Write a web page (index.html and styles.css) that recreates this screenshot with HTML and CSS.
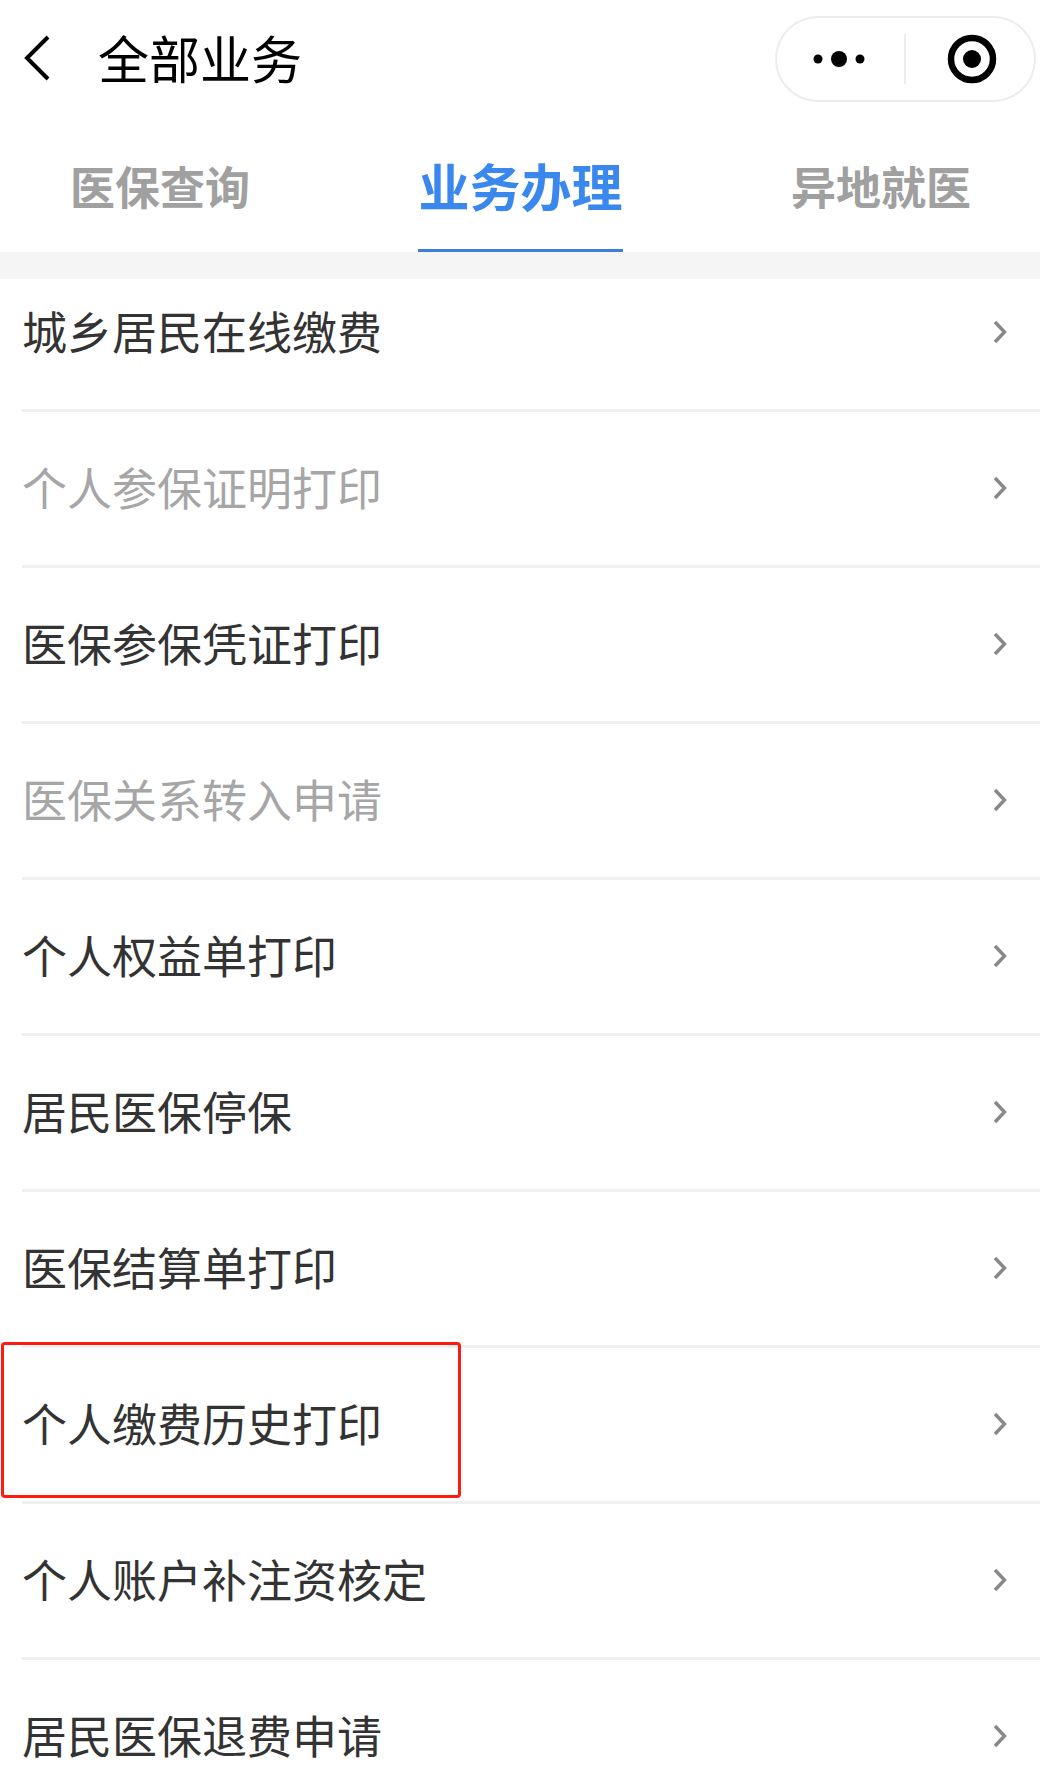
FILE: index.html
```html
<!DOCTYPE html>
<html lang="zh-CN">
<head>
<meta charset="utf-8">
<title>全部业务</title>
<link rel="stylesheet" href="styles.css">
</head>
<body>
<div class="page">
  <header class="navbar">
    <svg class="back" width="30" height="50" viewBox="0 0 30 50"><path d="M26 4 L5 25 L26 46" fill="none" stroke="#000" stroke-width="4"/></svg>
    <h1 class="title">全部业务</h1>
    <div class="capsule">
      <div class="capsule-cell capsule-more">
        <svg width="60" height="20" viewBox="0 0 60 20"><circle cx="9" cy="10" r="4.5"/><circle cx="30" cy="10" r="8"/><circle cx="51" cy="10" r="4.5"/></svg>
      </div>
      <div class="capsule-sep"></div>
      <div class="capsule-cell capsule-rec">
        <svg width="50" height="50" viewBox="0 0 50 50"><circle cx="25" cy="25" r="21" fill="none" stroke="#000" stroke-width="6.5"/><circle cx="25" cy="25" r="9"/></svg>
      </div>
    </div>
  </header>
  <nav class="tabs">
    <div class="tab">医保查询</div>
    <div class="tab tab-active">业务办理</div>
    <div class="tab">异地就医</div>
  </nav>
  <div class="band"></div>
  <ul class="list">
    <li class="row"><span>城乡居民在线缴费</span><svg class="arrow" width="14" height="24" viewBox="0 0 14 24"><path d="M2 2 L11.5 12 L2 22"/></svg></li>
    <li class="row row-off"><span>个人参保证明打印</span><svg class="arrow" width="14" height="24" viewBox="0 0 14 24"><path d="M2 2 L11.5 12 L2 22"/></svg></li>
    <li class="row"><span>医保参保凭证打印</span><svg class="arrow" width="14" height="24" viewBox="0 0 14 24"><path d="M2 2 L11.5 12 L2 22"/></svg></li>
    <li class="row row-off"><span>医保关系转入申请</span><svg class="arrow" width="14" height="24" viewBox="0 0 14 24"><path d="M2 2 L11.5 12 L2 22"/></svg></li>
    <li class="row"><span>个人权益单打印</span><svg class="arrow" width="14" height="24" viewBox="0 0 14 24"><path d="M2 2 L11.5 12 L2 22"/></svg></li>
    <li class="row"><span>居民医保停保</span><svg class="arrow" width="14" height="24" viewBox="0 0 14 24"><path d="M2 2 L11.5 12 L2 22"/></svg></li>
    <li class="row"><span>医保结算单打印</span><svg class="arrow" width="14" height="24" viewBox="0 0 14 24"><path d="M2 2 L11.5 12 L2 22"/></svg></li>
    <li class="row"><span>个人缴费历史打印</span><svg class="arrow" width="14" height="24" viewBox="0 0 14 24"><path d="M2 2 L11.5 12 L2 22"/></svg><div class="highlight"></div></li>
    <li class="row"><span>个人账户补注资核定</span><svg class="arrow" width="14" height="24" viewBox="0 0 14 24"><path d="M2 2 L11.5 12 L2 22"/></svg></li>
    <li class="row"><span>居民医保退费申请</span><svg class="arrow" width="14" height="24" viewBox="0 0 14 24"><path d="M2 2 L11.5 12 L2 22"/></svg></li>
  </ul>
</div>
</body>
</html>
```
FILE: styles.css
```css
* { box-sizing: border-box; }
html, body { margin: 0; padding: 0; background: #fff; }
.page {
  width: 1040px;
  height: 1770px;
  overflow: hidden;
  font-family: "Noto Sans CJK SC", "Noto Sans", sans-serif;
}
.navbar {
  height: 118px;
  display: flex;
  align-items: center;
  padding: 0 4px 4px 22px;
}
.back { flex: none; position: relative; top: 1px; }
.title {
  margin: 0 0 0 46px;
  font-size: 51px;
  font-weight: 400;
  line-height: 1;
  color: #000;
}
.capsule {
  margin-left: auto;
  width: 261px;
  height: 86px;
  border: 2px solid #ececec;
  border-radius: 43px;
  display: flex;
  align-items: center;
  align-self: flex-start;
  margin-top: 16px;
}
.capsule-cell { flex: none; display: flex; align-items: center; justify-content: center; }
.capsule-more { width: 127px; padding-right: 3px; }
.capsule-rec { width: 128px; padding-left: 4px; }
.capsule-sep { width: 2px; height: 50px; background: #ececec; flex: none; }
.tabs {
  height: 134px;
  display: flex;
  justify-content: space-between;
  align-items: flex-start;
  padding: 0 69px 0 70px;
}
.tab {
  font-size: 45px;
  font-weight: 700;
  line-height: 50px;
  color: #a0a0a0;
  margin-top: 43px;
  height: 91px;
}
.tab-active {
  font-size: 51px;
  line-height: 50px;
  margin-top: 42px;
  height: 92px;
  color: #3a88ee;
  border-bottom: 3px solid #3a80dc;
}
.band {
  height: 27px;
  background: #f5f5f5;
  position: relative;
}
.list {
  list-style: none;
  margin: -23px 0 0;
  padding: 0;
}
.row {
  position: relative;
  height: 156px;
  margin-left: 22px;
  padding: 0 33px 5px 0;
  border-bottom: 3px solid #f0f0f0;
  display: flex;
  align-items: center;
  justify-content: space-between;
  font-size: 45px;
  line-height: 1;
  color: #333;
}
.row-off { color: #a6a6a6; }
.arrow { flex: none; margin-top: 3px; }
.arrow path { fill: none; stroke: #888; stroke-width: 3.4; }
.highlight {
  position: absolute;
  left: -21px;
  top: -6px;
  width: 460px;
  height: 156px;
  border: 3px solid #ff1a0f;
  border-radius: 4px;
}
```
